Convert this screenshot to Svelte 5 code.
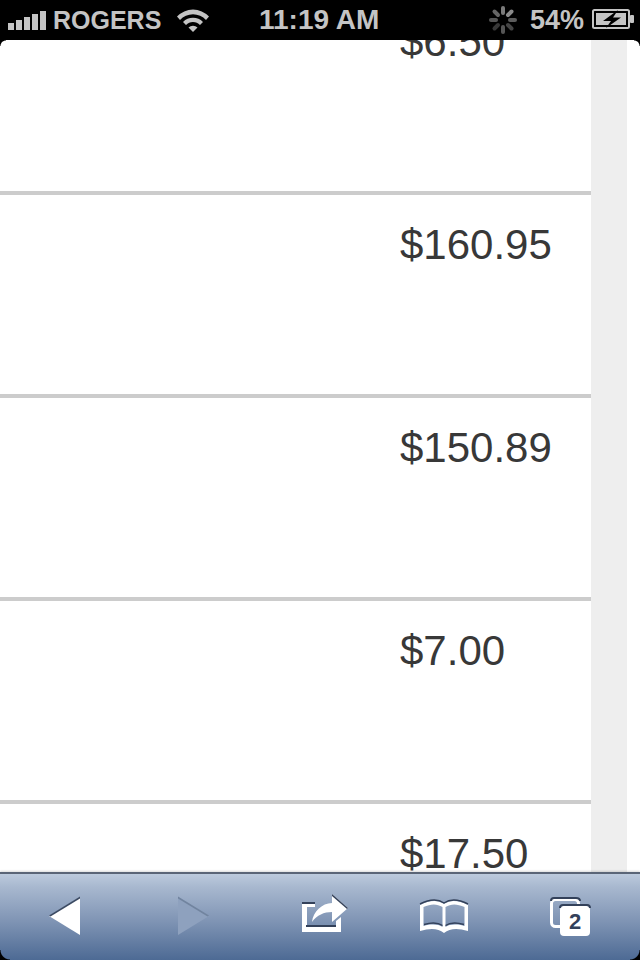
<script>
  const prices = ['$6.50', '$160.95', '$150.89', '$7.00', '$17.50'];
</script>

<div class="phone">
  <header class="status">
    <div class="left">
      <svg class="signal" width="38" height="19" viewBox="0 0 38 19">
        <rect x="0" y="12" width="6" height="7" fill="#c4c4c4" />
        <rect x="8" y="9" width="6" height="10" fill="#c4c4c4" />
        <rect x="16" y="6" width="6" height="13" fill="#c4c4c4" />
        <rect x="24" y="3" width="6" height="16" fill="#c4c4c4" />
        <rect x="32" y="0" width="6" height="19" fill="#c4c4c4" />
      </svg>
      <span class="carrier">ROGERS</span>
      <svg class="wifi" width="32" height="24" viewBox="0 0 32 24">
        <path d="M0 8.5 A22 22 0 0 1 32 8.5 L29 12 A17.5 17.5 0 0 0 3 12 Z" fill="#c4c4c4" />
        <path d="M6 14 A14 14 0 0 1 26 14 L23 17 A9.5 9.5 0 0 0 9 17 Z" fill="#c4c4c4" />
        <path d="M11.5 19.5 A6.5 6.5 0 0 1 20.5 19.5 L16 24 Z" fill="#c4c4c4" />
      </svg>
    </div>
    <span class="time">11:19 AM</span>
    <div class="right">
      <svg class="spinner" width="30" height="30" viewBox="0 0 30 30">
        <g stroke-width="4" stroke-linecap="round">
          <line x1="15" y1="3" x2="15" y2="8" stroke="#7a7a7a" />
          <line x1="23.5" y1="6.5" x2="20" y2="10" stroke="#8a8a8a" />
          <line x1="27" y1="15" x2="22" y2="15" stroke="#5c5c5c" />
          <line x1="23.5" y1="23.5" x2="20" y2="20" stroke="#444" />
          <line x1="15" y1="27" x2="15" y2="22" stroke="#555" />
          <line x1="6.5" y1="23.5" x2="10" y2="20" stroke="#383838" />
          <line x1="3" y1="15" x2="8" y2="15" stroke="#555" />
          <line x1="6.5" y1="6.5" x2="10" y2="10" stroke="#666" />
        </g>
      </svg>
      <span class="pct">54%</span>
      <svg class="battery" width="42" height="20" viewBox="0 0 42 20">
        <rect x="1" y="1" width="36" height="18" rx="1.5" fill="none" stroke="#c4c4c4" stroke-width="2" />
        <rect x="4" y="4" width="30" height="12" fill="#c4c4c4" />
        <rect x="38" y="6" width="4" height="8" rx="1" fill="#c4c4c4" />
        <path d="M26 1 L11 12 H19 L14 19 L29 8.5 H21 Z" fill="#000" />
      </svg>
    </div>
  </header>

  <main class="page">
    <div class="table">
      {#each prices as price}
        <div class="row"><span class="price">{price}</span></div>
      {/each}
    </div>
    <div class="rail"></div>
    <div class="gutter"></div>
    <i class="corner tl"></i>
    <i class="corner tr"></i>
  </main>

  <footer class="toolbar">
    <svg width="640" height="86" viewBox="0 0 640 86">
      <path d="M49 42 L80 23 V61 Z" fill="#fff" />
      <path d="M49 41.5 L80 22.5 V24.5 L50.5 42.5 Z" fill="#3b4a63" />
      <path d="M209 42 L178 23 V61 Z" fill="#8ea1be" />
      <path d="M178 22.5 L209 41.5 L207.5 42.5 L178 24.5 Z" fill="#71849f" />

      <path d="M302 28 H315 V33 H307 V53 H336 V47 L341 43 V58 H302 Z" fill="#fff" />
      <path d="M302 28 H315 V30 H302 Z M306 51 H336 V53 H306 Z" fill="#33415a" />
      <path d="M312 48 C313 38 322 29 332 29 V20 L348 34 L332 48 V38 C324 38 317 41 312 48 Z" fill="#fff" />
      <path d="M332 20 L348 34 L347 35 L332 22 Z" fill="#33415a" />

      <path d="M420 31 C430 26 438 26 444 30 C450 26 458 26 468 31 V57 C458 54 450 54 444 59 C438 54 430 54 420 57 Z M423.5 33 V52 C431 50 438 50 442.5 53 V33 C437 29.5 431 29.5 423.5 33 Z M445.5 33 V53 C450 50 457 50 464.5 52 V33 C457 29.5 451 29.5 445.5 33 Z" fill="#fff" fill-rule="evenodd" />
      <path d="M420 30 C430 25 438 25 444 29 C450 25 458 25 468 30" fill="none" stroke="#33415a" stroke-width="1.5" />
      <path d="M424 50.5 C431 48.5 438 48.5 442.5 51.5 M445.5 51.5 C450 48.5 457 48.5 464 50.5" fill="none" stroke="#33415a" stroke-width="1.5" />

      <rect x="551.5" y="25.5" width="27" height="27" rx="4" fill="none" stroke="#fff" stroke-width="3" />
      <path d="M551 27 C551 25 552 24 554 24 H576 C578 24 580 25 580 27" fill="none" stroke="#33415a" stroke-width="2" />
      <rect x="560" y="32" width="30" height="30" rx="4" fill="#fff" />
      <path d="M560 34 C560 32 561 31 563 31 H587 C589 31 590 32 590 34" fill="none" stroke="#33415a" stroke-width="2" />
    </svg>
    <span class="count">2</span>
    <i class="corner big bl"></i>
    <i class="corner big br"></i>
  </footer>
</div>

<style>
  :global(body) {
    margin: 0;
    background: #000;
  }

  .phone {
    width: 640px;
    height: 960px;
    display: flex;
    flex-direction: column;
    overflow: hidden;
    font-family: "Liberation Sans", Arial, sans-serif;
  }

  .status {
    height: 40px;
    flex: none;
    background: #000;
    color: #c4c4c4;
    font-weight: 700;
    display: flex;
    align-items: center;
    justify-content: space-between;
    padding: 0 6px 0 8px;
    position: relative;
  }

  .left, .right {
    display: flex;
    align-items: center;
  }

  .signal { margin-right: 7px; }
  .carrier { font-size: 25px; line-height: 40px; }
  .wifi { margin-left: 16px; margin-top: -1px; }

  .time {
    position: absolute;
    left: 259px;
    top: 0;
    font-size: 28px;
    line-height: 40px;
  }

  .spinner { margin-right: 12px; }
  .pct { font-size: 27px; line-height: 40px; margin-right: 8px; }
  .battery { margin-top: -2px; }

  .page {
    height: 832px;
    flex: none;
    background: #fff;
    display: grid;
    grid-template-columns: 591px 36px 13px;
    overflow: hidden;
    position: relative;
  }

  .table {
    margin-top: -48px;
  }

  .row {
    height: 203px;
    box-sizing: border-box;
    border-bottom: 4px solid #ccc;
    padding: 26px 0 0 400px;
  }

  .price {
    font-size: 42px;
    line-height: 48px;
    color: #383838;
    display: block;
  }

  .rail { background: #eee; }
  .gutter { background: #fff; }

  .corner {
    position: absolute;
    width: 6px;
    height: 6px;
    background: radial-gradient(circle at var(--c), transparent 5px, #000 6px);
  }
  .corner.big {
    width: 10px;
    height: 10px;
    background: radial-gradient(circle at var(--c), transparent 9px, #000 10px);
  }
  .tl { left: 0; top: 0; --c: 100% 100%; }
  .tr { right: 0; top: 0; --c: 0% 100%; }
  .bl { left: 0; bottom: 0; --c: 100% 0%; }
  .br { right: 0; bottom: 0; --c: 0% 0%; }

  .toolbar {
    height: 88px;
    flex: none;
    box-sizing: border-box;
    border-top: 2px solid #5a6577;
    box-shadow: 0 -1px 2px rgba(0, 0, 0, 0.15);
    background: linear-gradient(#bccadd, #a8b8cf 15%, #7f94b4 55%, #4d6a94);
    position: relative;
  }

  .toolbar svg { display: block; }

  .count {
    position: absolute;
    left: 560px;
    width: 30px;
    top: 33px;
    text-align: center;
    font-size: 22px;
    line-height: 30px;
    font-weight: 700;
    color: #33415a;
  }
</style>
